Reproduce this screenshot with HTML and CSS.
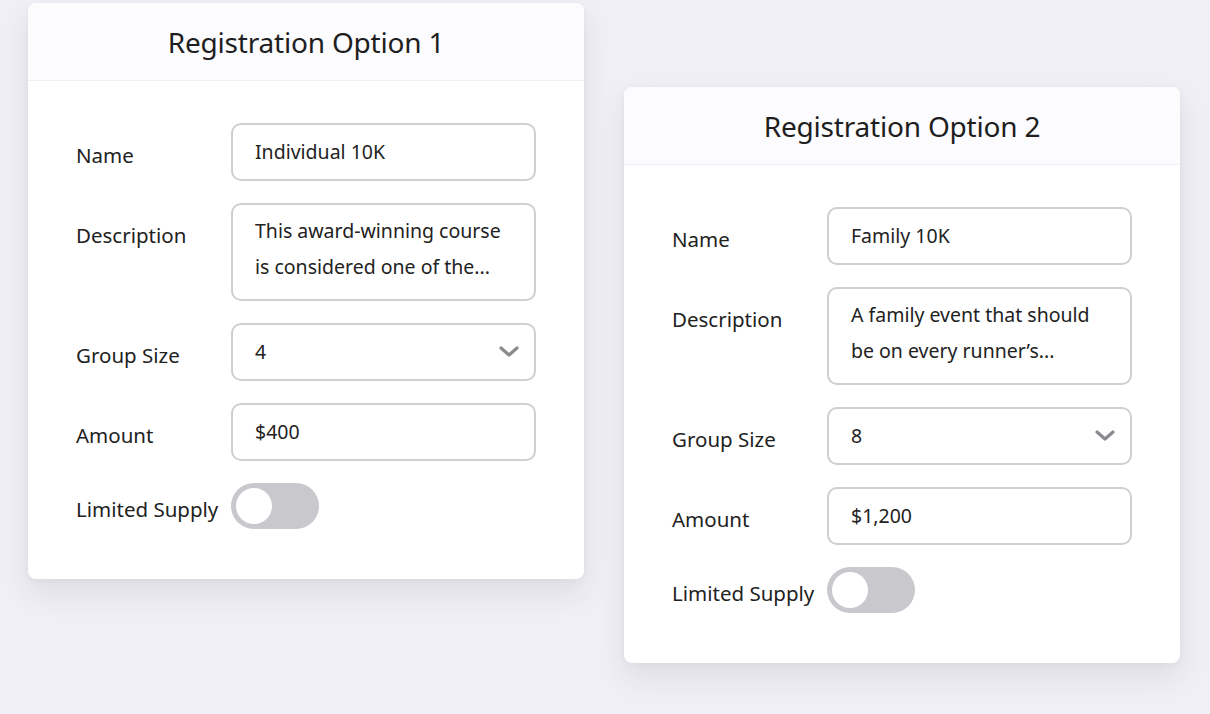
FILE: index.html
```html
<!DOCTYPE html>
<html>
<head>
<meta charset="utf-8">
<link rel="stylesheet" href="styles.css">
</head>
<body>
<div class="canvas">
  <section class="card card-1">
    <header class="card-head"><h2>Registration Option 1</h2></header>
    <div class="card-body">
      <div class="row">
        <span class="label">Name</span>
        <div class="field">Individual 10K</div>
      </div>
      <div class="row">
        <span class="label">Description</span>
        <div class="field area">This award-winning course is considered one of the...</div>
      </div>
      <div class="row">
        <span class="label">Group Size</span>
        <div class="field select">4
          <svg class="chev" width="22" height="14" viewBox="0 0 22 14"><path d="M3 3 L11 10 L19 3" fill="none" stroke="#8a8a8e" stroke-width="3.2" stroke-linecap="round" stroke-linejoin="round"/></svg>
        </div>
      </div>
      <div class="row">
        <span class="label">Amount</span>
        <div class="field">$400</div>
      </div>
      <div class="row toggle-row">
        <span class="label">Limited Supply</span>
        <div class="toggle"><span class="knob"></span></div>
      </div>
    </div>
  </section>
  <section class="card card-2">
    <header class="card-head"><h2>Registration Option 2</h2></header>
    <div class="card-body">
      <div class="row">
        <span class="label">Name</span>
        <div class="field">Family 10K</div>
      </div>
      <div class="row">
        <span class="label">Description</span>
        <div class="field area">A family event that should be on every runner’s...</div>
      </div>
      <div class="row">
        <span class="label">Group Size</span>
        <div class="field select">8
          <svg class="chev" width="22" height="14" viewBox="0 0 22 14"><path d="M3 3 L11 10 L19 3" fill="none" stroke="#8a8a8e" stroke-width="3.2" stroke-linecap="round" stroke-linejoin="round"/></svg>
        </div>
      </div>
      <div class="row">
        <span class="label">Amount</span>
        <div class="field">$1,200</div>
      </div>
      <div class="row toggle-row">
        <span class="label">Limited Supply</span>
        <div class="toggle"><span class="knob"></span></div>
      </div>
    </div>
  </section>
</div>
</body>
</html>
```
FILE: styles.css
```css
html, body {
  margin: 0;
  padding: 0;
}
body {
  background: #f0eff5;
  font-family: "Noto Sans", "Liberation Sans", sans-serif;
  color: #1f1f22;
  width: 1210px;
  height: 714px;
  overflow: hidden;
}
.canvas {
  display: flex;
  align-items: flex-start;
  gap: 40px;
  padding-left: 28px;
}
.card {
  width: 556px;
  background: #ffffff;
  border-radius: 8px;
  box-shadow: 0 14px 30px rgba(40, 40, 70, 0.09), 0 2px 6px rgba(40, 40, 70, 0.04);
  overflow: hidden;
}
.card-1 { margin-top: 3px; }
.card-2 { margin-top: 87px; }
.card-head {
  height: 77px;
  background: #fcfbfe;
  border-bottom: 1px solid #f0eff4;
  display: flex;
  align-items: center;
  justify-content: center;
}
.card-head h2 {
  margin: 0;
  font-size: 28px;
  font-weight: 400;
  color: #1e1e21;
  letter-spacing: -0.2px;
}
.card-body {
  padding: 42px 48px 50px;
  display: flex;
  flex-direction: column;
  gap: 22px;
}
.row {
  display: flex;
  align-items: flex-start;
}
.label {
  box-sizing: border-box;
  width: 155px;
  height: 58px;
  flex: none;
  font-size: 20.5px;
  padding-top: 6px;
  line-height: 52px;
  color: #222;
  white-space: nowrap;
}
.field {
  box-sizing: border-box;
  width: 305px;
  height: 58px;
  border: 2px solid #cfcfd2;
  border-radius: 10px;
  padding: 0 22px;
  font-size: 19.5px;
  line-height: 54px;
  color: #222;
  position: relative;
}
.field.area {
  height: 98px;
  line-height: 36px;
  padding-top: 8px;
}
.chev {
  position: absolute;
  right: 14px;
  top: 20px;
}
.toggle-row .label {
  height: 46px;
  padding-top: 3px;
  line-height: 46px;
}
.toggle {
  width: 88px;
  height: 46px;
  border-radius: 23px;
  background: #c8c8cd;
  position: relative;
}
.knob {
  position: absolute;
  left: 5px;
  top: 5px;
  width: 36px;
  height: 36px;
  border-radius: 50%;
  background: #ffffff;
}
```
